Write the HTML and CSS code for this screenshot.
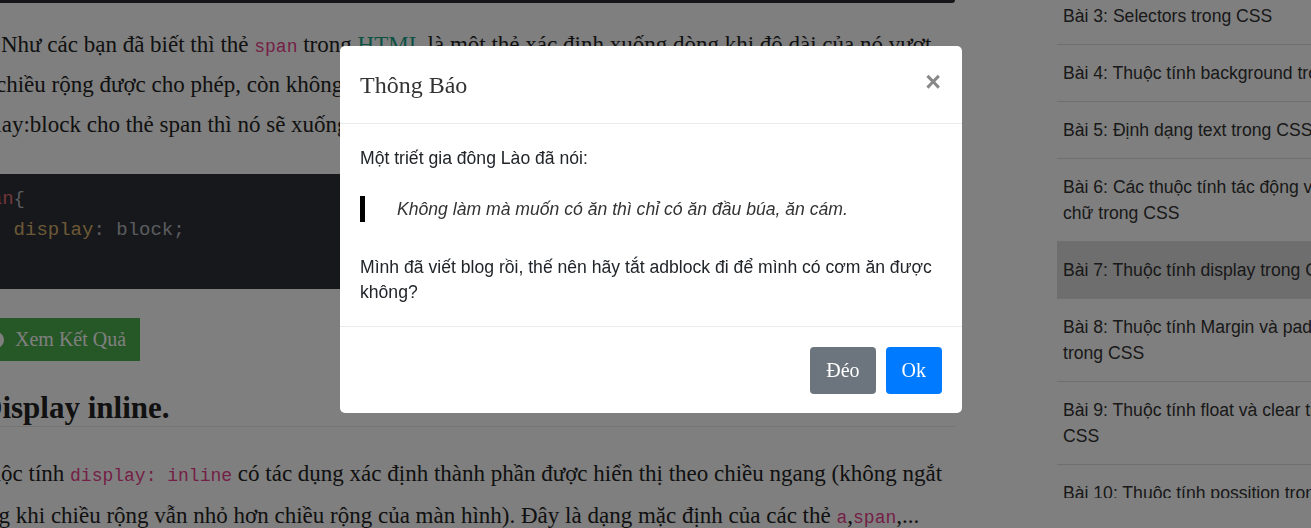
FILE: index.html
```html
<!DOCTYPE html>
<html lang="vi">
<head>
<meta charset="utf-8">
<title>Thuộc tính display trong CSS</title>
<link rel="stylesheet" href="styles.css">
</head>
<body>
<div class="page">
  <main class="content">
    <div class="code-tail"></div>
    <p class="lines lead">Như các bạn đã biết thì thẻ <code>span</code> trong <a class="link" href="#">HTML</a> là một thẻ xác định xuống dòng khi độ dài của nó vượt<br>quá chiều rộng được cho phép, còn không thì nó sẽ nằm trên cùng một dòng. Nếu thiết lập<br>display:block cho thẻ span thì nó sẽ xuống dòng giống như thẻ div.</p>
    <pre class="code"><span class="c-sel">span</span><span class="c-pun">{</span>
    <span class="c-prop">display</span><span class="c-pun">: block;</span>
<span class="c-pun">}</span></pre>
    <div class="run-row">
      <button class="btn-run" type="button"><svg class="play" width="16" height="16" viewBox="0 0 16 16"><circle cx="8" cy="8" r="8" fill="#fff"/><path d="M6 4.5 L11.5 8 L6 11.5 Z" fill="#4cae4c"/></svg><span>Xem Kết Quả</span></button>
    </div>
    <h2 class="sub">Display inline.</h2>
    <p class="lines p2">Thuộc tính <code>display: inline</code> có tác dụng xác định thành phần được hiển thị theo chiều ngang (không ngắt<br>dòng khi chiều rộng vẫn nhỏ hơn chiều rộng của màn hình). Đây là dạng mặc định của các thẻ <code>a</code>,<code>span</code>,...</p>
  </main>
  <aside class="sidebar">
    <ul class="lessons">
      <li>Bài 3: Selectors trong CSS</li>
      <li>Bài 4: Thuộc tính background trong CSS</li>
      <li>Bài 5: Định dạng text trong CSS</li>
      <li>Bài 6: Các thuộc tính tác động vào<br>chữ trong CSS</li>
      <li class="active">Bài 7: Thuộc tính display trong CSS</li>
      <li>Bài 8: Thuộc tính Margin và padding<br>trong CSS</li>
      <li>Bài 9: Thuộc tính float và clear trong<br>CSS</li>
      <li>Bài 10: Thuộc tính possition trong CSS</li>
      <li>Bài 11: Thuộc tính overflow trong CSS</li>
    </ul>
  </aside>
</div>

<div class="backdrop"></div>

<div class="modal" role="dialog">
  <div class="modal-header">
    <h5 class="modal-title">Thông Báo</h5>
    <button class="close" type="button">×</button>
  </div>
  <div class="modal-body">
    <p class="m-p1">Một triết gia đông Lào đã nói:</p>
    <blockquote class="quote">Không làm mà muốn có ăn thì chỉ có ăn đầu búa, ăn cám.</blockquote>
    <p class="m-p3">Mình đã viết blog rồi, thế nên hãy tắt adblock đi để mình có cơm ăn được<br>không?</p>
  </div>
  <div class="modal-footer">
    <button class="btn btn-secondary" type="button">Đéo</button>
    <button class="btn btn-primary" type="button">Ok</button>
  </div>
</div>
</body>
</html>
```

FILE: styles.css
```css
html, body {
  margin: 0;
  height: 100%;
  overflow: hidden;
  background: #fff;
}

body {
  font-family: "Liberation Serif", "Times New Roman", serif;
  color: #222;
}

.page {
  display: flex;
  align-items: flex-start;
}

/* main article column */
.content {
  flex: 0 0 991px;
  margin-left: -36px;
  overflow: hidden;
  font-size: 23px;
  line-height: 40px;
}

.code-tail {
  height: 3px;
  background: #2c2d31;
  border-bottom-right-radius: 4px;
}

.lines {
  white-space: nowrap;
}

.lead {
  margin: 22px 0 0 -7px;
  text-indent: 44px;
}

.content code {
  font-family: "Liberation Mono", "DejaVu Sans Mono", monospace;
  font-size: 18px;
  line-height: 1;
  color: #e83e8c;
}

.link {
  color: #17a589;
  text-decoration: none;
}

.code {
  margin: 29px 0 0;
  padding: 10px 0 12px 4px;
  background: #2f3136;
  border-radius: 4px;
  font-family: "Liberation Mono", "DejaVu Sans Mono", monospace;
  font-size: 19px;
  line-height: 31px;
  color: #b4b8bf;
}

.c-sel { color: #e06c75; }
.c-prop { color: #d8b36e; }
.c-pun { color: #b4b8bf; }

.run-row {
  margin-top: 29px;
  display: flex;
}

.btn-run {
  display: flex;
  align-items: center;
  gap: 11px;
  height: 43px;
  padding: 0 14px 0 24px;
  border: 0;
  background: #4cae4c;
  color: #fff;
  font-family: "Liberation Serif", serif;
  font-size: 20px;
}

.play {
  flex: 0 0 16px;
}

.sub {
  margin: 28px 0 0 16px;
  font-size: 31px;
  line-height: 37px;
  font-weight: bold;
  border-bottom: 1px solid #e8e8e8;
}

.p2 {
  margin: 26px 0 0;
  line-height: 42px;
}

/* sidebar */
.sidebar {
  flex: 0 0 310px;
  margin-left: 102px;
  margin-top: -12px;
  height: 510px;
  overflow: hidden;
  font-family: "Liberation Sans", Arial, sans-serif;
  font-size: 17.6px;
  line-height: 26px;
  color: #333;
}

.lessons {
  list-style: none;
  margin: 0;
  padding: 0;
}

.lessons li {
  padding: 15px 6px;
  border-bottom: 1px solid #dedede;
  white-space: nowrap;
}

.lessons li.active {
  background: #dcdcdc;
}

/* modal */
.backdrop {
  position: fixed;
  inset: 0;
  background: rgba(0, 0, 0, 0.5);
}

.modal {
  position: fixed;
  top: 46px;
  left: 340px;
  width: 622px;
  background: #fff;
  border-radius: 5px;
  font-family: "Liberation Sans", Arial, sans-serif;
  color: #212529;
  overflow: hidden;
}

.modal-header {
  display: flex;
  align-items: center;
  justify-content: space-between;
  padding: 21px 20px 20px;
  border-bottom: 1px solid #e9ecef;
}

.modal-title {
  margin: 0;
  font-family: "Liberation Serif", serif;
  font-size: 24px;
  line-height: 36px;
  font-weight: normal;
  color: #333;
}

.close {
  border: 0;
  background: none;
  padding: 0;
  margin: -6px 1px 0 0;
  font-family: "Liberation Sans", Arial, sans-serif;
  font-size: 27px;
  line-height: 1;
  font-weight: bold;
  color: #888;
}

.modal-body {
  padding: 22px 20px 21px;
  font-size: 17.6px;
  line-height: 25px;
}

.m-p1 {
  margin: 0 0 25px;
}

.quote {
  margin: 0 0 33px;
  padding-left: 32px;
  border-left: 5px solid #000;
  line-height: 26px;
  font-style: italic;
  color: #333;
}

.m-p3 {
  margin: 0;
}

.modal-footer {
  display: flex;
  justify-content: flex-end;
  gap: 10px;
  padding: 20px 20px 19px;
  border-top: 1px solid #e9ecef;
}

.btn {
  height: 47px;
  padding: 0 16px;
  border: 0;
  border-radius: 4px;
  color: #fff;
  font-family: "Liberation Serif", serif;
  font-size: 20px;
}

.btn-secondary {
  background: #6c757d;
}

.btn-primary {
  background: #007bff;
}
```
